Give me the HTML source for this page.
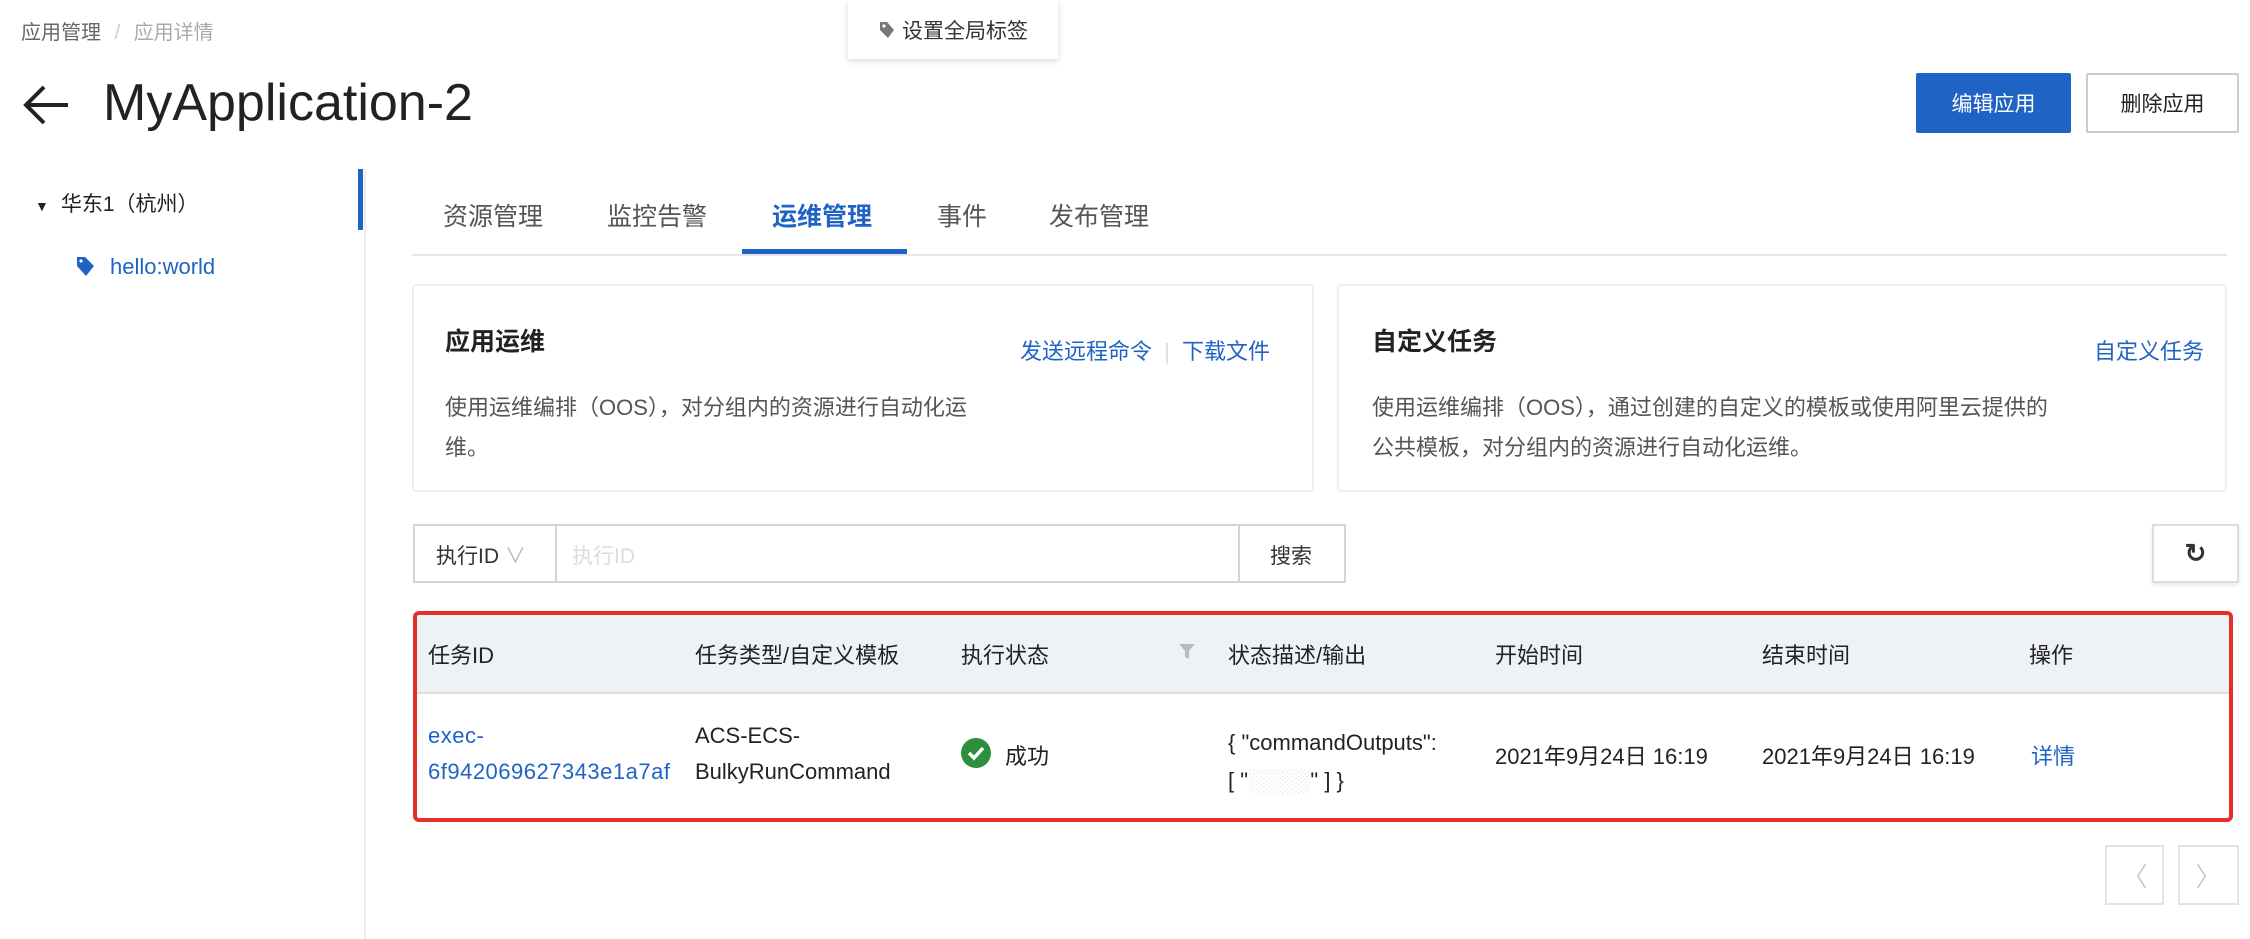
<!DOCTYPE html>
<html><head><meta charset="utf-8"><style>
*{box-sizing:border-box;margin:0;padding:0}
body{width:2250px;height:939px;background:#fff;font-family:"Liberation Sans","Noto Sans CJK SC",sans-serif;color:#333;position:relative;overflow:hidden;font-size:20px}
.a{position:absolute;white-space:nowrap}
.blue{color:#1f63c5}
.btn{position:absolute;display:flex;align-items:center;justify-content:center;font-size:21px}
.t{font-size:22px}
</style></head><body>
<div class="a" style="left:21px;top:16px;color:#666;font-size:20px">应用管理 <span style="color:#ccc;margin:0 8px">/</span> <span style="color:#aaa">应用详情</span></div>
<div class="a" style="left:848px;top:0;width:210px;height:59px;box-shadow:0 2px 6px rgba(0,0,0,.15);background:#fff;display:flex;align-items:center;justify-content:center;font-size:21px">
<svg width="18" height="20" viewBox="0 0 18 20" style="margin-right:6px"><path d="M2 2h7l7 8-6 8-8-8z" fill="#777"/><circle cx="6" cy="6" r="1.6" fill="#fff"/></svg>设置全局标签</div>
<svg class="a" style="left:22px;top:84px" width="48" height="42" viewBox="0 0 48 42"><path d="M46 21H4M22 3L4 21l18 18" stroke="#222" stroke-width="4" fill="none"/></svg>
<div class="a" style="left:103px;top:73px;font-size:52px;color:#222">MyApplication-2</div>
<div class="btn" style="left:1916px;top:73px;width:155px;height:60px;background:#1f63c5;color:#fff;border-radius:2px">编辑应用</div>
<div class="btn" style="left:2086px;top:73px;width:153px;height:60px;border:2px solid #ccc;color:#222;border-radius:2px">删除应用</div>
<div class="a" style="left:364px;top:169px;width:2px;height:770px;background:#eee"></div>
<div class="a" style="left:358px;top:169px;width:5px;height:61px;background:#1f63c5"></div>
<div class="a" style="left:35px;top:188px;font-size:21px;color:#222"><span style="font-size:14px;margin-right:12px">▼</span>华东1（杭州）</div>
<svg class="a" style="left:76px;top:256px" width="20" height="22" viewBox="0 0 20 22"><path d="M1 1h8l9 9-8 10-9-10z" fill="#1f63c5"/><circle cx="5" cy="5" r="1.6" fill="#fff"/></svg>
<div class="a blue" style="left:110px;top:254px;font-size:22px">hello:world</div>
<div class="a" style="left:412px;top:254px;width:1815px;height:2px;background:#e6e6e6"></div>
<div class="a" style="left:443px;top:197px;font-size:25px;color:#555">资源管理</div>
<div class="a" style="left:607px;top:197px;font-size:25px;color:#555">监控告警</div>
<div class="a blue" style="left:772px;top:197px;font-size:25px;font-weight:bold">运维管理</div>
<div class="a" style="left:937px;top:197px;font-size:25px;color:#555">事件</div>
<div class="a" style="left:1049px;top:197px;font-size:25px;color:#555">发布管理</div>
<div class="a" style="left:742px;top:249px;width:165px;height:5px;background:#1f63c5"></div>
<div class="a" style="left:412px;top:284px;width:902px;height:208px;border:2px solid #eee;border-radius:4px"></div>
<div class="a" style="left:445px;top:322px;font-size:25px;color:#222;font-weight:bold">应用运维</div>
<div class="a blue" style="left:1020px;top:334px;font-size:22px">发送远程命令 <span style="color:#ddd;margin:0 6px">|</span> 下载文件</div>
<div class="a" style="left:445px;top:388px;font-size:22px;color:#555;line-height:40px">使用运维编排（OOS），对分组内的资源进行自动化运<br>维。</div>
<div class="a" style="left:1337px;top:284px;width:890px;height:208px;border:2px solid #eee;border-radius:4px"></div>
<div class="a" style="left:1372px;top:322px;font-size:25px;color:#222;font-weight:bold">自定义任务</div>
<div class="a blue" style="left:2094px;top:334px;font-size:22px">自定义任务</div>
<div class="a" style="left:1372px;top:388px;font-size:22px;color:#555;line-height:40px">使用运维编排（OOS），通过创建的自定义的模板或使用阿里云提供的<br>公共模板，对分组内的资源进行自动化运维。</div>
<div class="a" style="left:413px;top:524px;width:933px;height:59px;border:2px solid #d4d4d4"></div>
<div class="a" style="left:555px;top:524px;width:2px;height:59px;background:#d4d4d4"></div>
<div class="a" style="left:1238px;top:524px;width:2px;height:59px;background:#d4d4d4"></div>
<div class="a" style="left:436px;top:540px;font-size:21px">执行ID <span style="color:#bbb">∨</span></div>
<div class="a" style="left:572px;top:540px;font-size:21px;color:#ddd">执行ID</div>
<div class="a" style="left:1270px;top:540px;font-size:21px">搜索</div>
<div class="btn" style="left:2152px;top:524px;width:87px;height:59px;border:2px solid #ddd;box-shadow:0 2px 4px rgba(0,0,0,.1);font-size:26px;font-weight:bold">↻</div>
<div class="a" style="left:413px;top:611px;width:1820px;height:211px;border:4px solid #e5302a;border-radius:6px;overflow:hidden">
<div style="height:79px;background:#eef1f6;border-bottom:2px solid #ddd"></div></div>
<div class="a t" style="left:428px;top:638px;color:#222">任务ID</div>
<div class="a t" style="left:695px;top:638px;color:#222">任务类型/自定义模板</div>
<div class="a t" style="left:961px;top:638px;color:#222">执行状态</div>
<svg class="a" style="left:1178px;top:643px" width="18" height="18" viewBox="0 0 18 18"><path d="M1 1h16l-6 7v8l-4-2v-6z" fill="#bbb"/></svg>
<div class="a t" style="left:1228px;top:638px;color:#222">状态描述/输出</div>
<div class="a t" style="left:1495px;top:638px;color:#222">开始时间</div>
<div class="a t" style="left:1762px;top:638px;color:#222">结束时间</div>
<div class="a t" style="left:2029px;top:638px;color:#222">操作</div>
<div class="a blue t" style="left:428px;top:718px;line-height:36px;letter-spacing:0.5px">exec-<br>6f942069627343e1a7af</div>
<div class="a t" style="left:695px;top:718px;line-height:36px;color:#222">ACS-ECS-<br>BulkyRunCommand</div>
<svg class="a" style="left:961px;top:738px" width="30" height="30" viewBox="0 0 30 30"><circle cx="15" cy="15" r="15" fill="#2f8f3f"/><path d="M8 15l5 5 9-10" stroke="#fff" stroke-width="3.5" fill="none"/></svg>
<div class="a t" style="left:1005px;top:739px;color:#222">成功</div>
<div class="a t" style="left:1228px;top:724px;line-height:38px;color:#222">{ "commandOutputs":<br>[ "<span style="color:#ddd">░░░░</span>" ] }</div>
<div class="a t" style="left:1495px;top:739px;color:#222">2021年9月24日 16:19</div>
<div class="a t" style="left:1762px;top:739px;color:#222">2021年9月24日 16:19</div>
<div class="a blue t" style="left:2031px;top:739px">详情</div>
<div class="btn" style="left:2105px;top:845px;width:59px;height:60px;border:2px solid #e3e3e3;color:#ccc;font-size:26px">〈</div>
<div class="btn" style="left:2178px;top:845px;width:61px;height:60px;border:2px solid #e3e3e3;color:#ccc;font-size:26px">〉</div>
</body></html>
